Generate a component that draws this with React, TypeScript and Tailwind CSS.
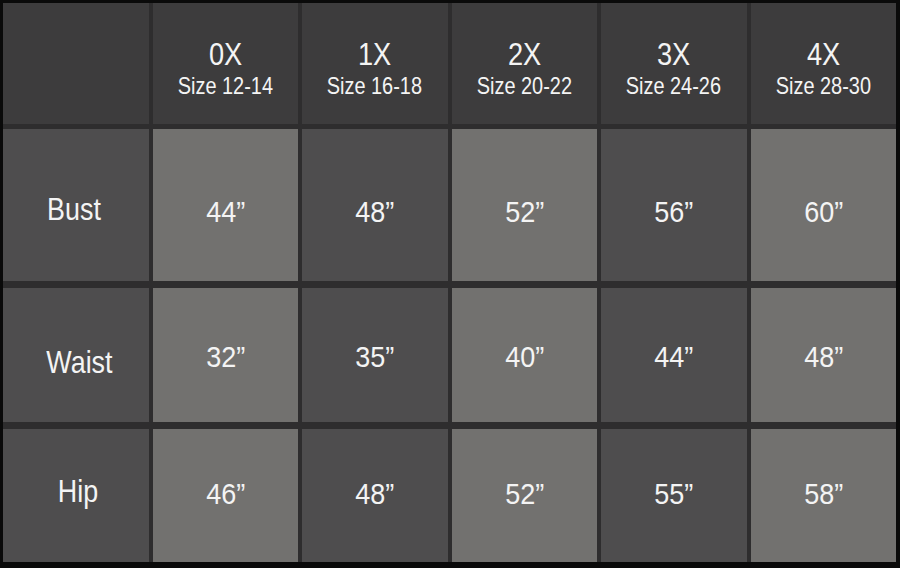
import React from 'react';

const sizes = [
  { code: '0X', range: 'Size 12-14' },
  { code: '1X', range: 'Size 16-18' },
  { code: '2X', range: 'Size 20-22' },
  { code: '3X', range: 'Size 24-26' },
  { code: '4X', range: 'Size 28-30' },
];

// per-row heights and small nudges so text sits where the chart has it
const rows = [
  {
    label: 'Bust',
    values: ['44”', '48”', '52”', '56”', '60”'],
    row: 'h-[152px] mt-[5px]',
    labelPad: 'pt-[8px] pr-[4px]',
    valuePad: 'pt-[14px]',
  },
  {
    label: 'Waist',
    values: ['32”', '35”', '40”', '44”', '48”'],
    row: 'h-[134px] mt-[7px]',
    labelPad: 'pt-[13px] pl-[8px]',
    valuePad: 'pt-[4px]',
  },
  {
    label: 'Hip',
    values: ['46”', '48”', '52”', '55”', '58”'],
    row: 'h-[133px] mt-[7px]',
    labelPad: 'pb-[9px] pl-[4px]',
    valuePad: 'pb-[3px]',
  },
];

export default function App() {
  return (
    <div
      className="w-[900px] h-[568px] bg-[#0a0a0a] pt-[3px] pl-[3px] pr-[4px] pb-[6px] text-[#f4f4f4]"
      style={{ fontFamily: '"Liberation Sans", Arial, sans-serif' }}
    >
      <div className="flex flex-col h-full bg-[#2e2d2e]">
        {/* Header */}
        <div className="grid grid-cols-6 gap-x-[4px] h-[121px]">
          <div className="bg-[#3d3c3d]" />
          {sizes.map((s) => (
            <div key={s.code} className="bg-[#3d3c3d] flex flex-col items-center pt-[34px]">
              <span className="text-[32px] leading-[34px] scale-x-[0.85]">{s.code}</span>
              <span className="mt-[2px] text-[24px] leading-[26px] scale-x-[0.83] whitespace-nowrap">{s.range}</span>
            </div>
          ))}
        </div>

        {/* Body rows */}
        {rows.map((r) => (
          <div key={r.label} className={`grid grid-cols-6 gap-x-[4px] ${r.row}`}>
            <div className={`bg-[#4e4d4e] flex items-center justify-center ${r.labelPad}`}>
              <span className="text-[32px] leading-none scale-x-[0.84]">{r.label}</span>
            </div>
            {r.values.map((v, i) => (
              <div
                key={i}
                className={`flex items-center justify-center ${r.valuePad} ${i % 2 === 0 ? 'bg-[#72716f]' : 'bg-[#4e4d4e]'}`}
              >
                <span className="text-[30px] leading-none scale-x-[0.9]">{v}</span>
              </div>
            ))}
          </div>
        ))}
      </div>
    </div>
  );
}
